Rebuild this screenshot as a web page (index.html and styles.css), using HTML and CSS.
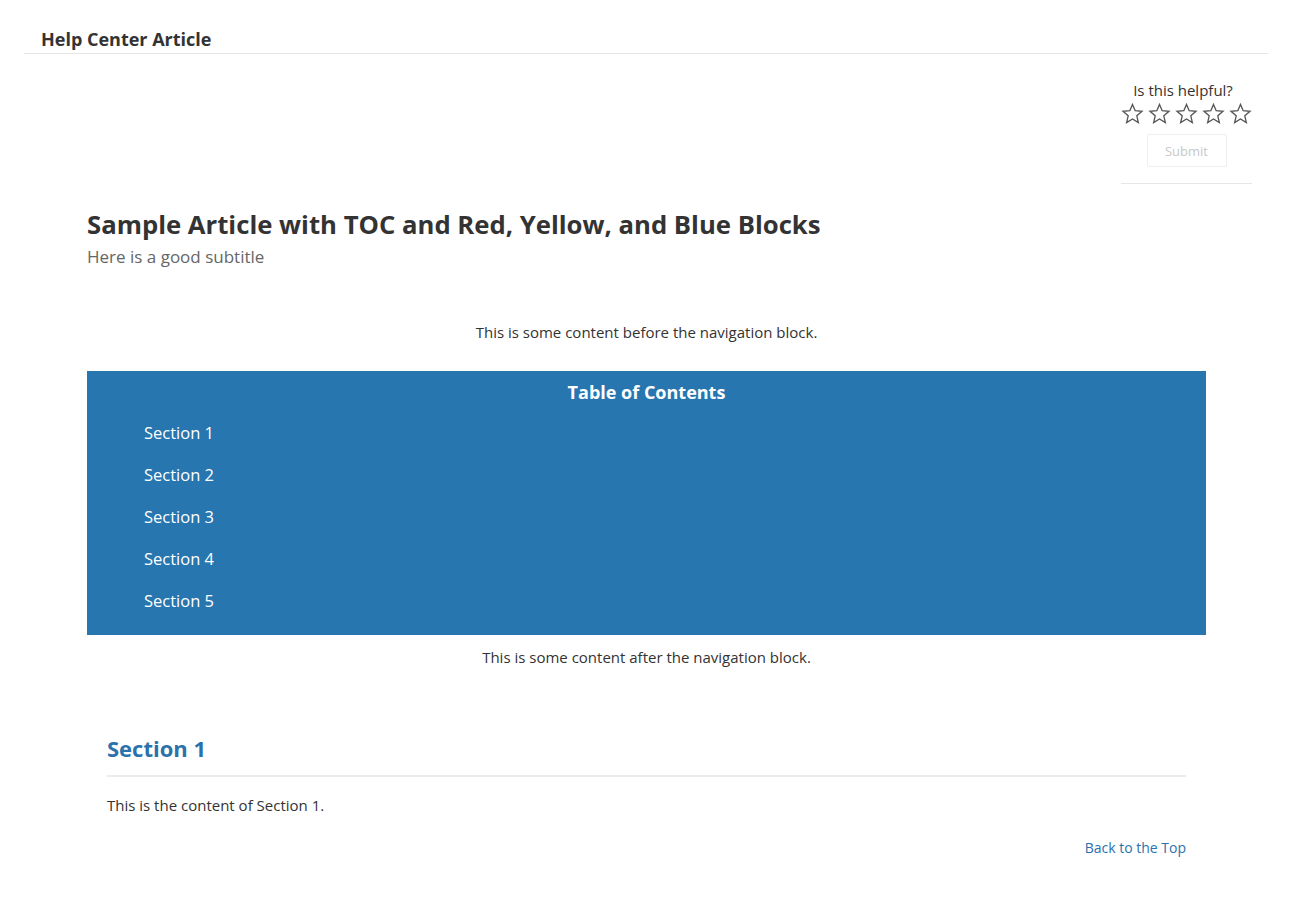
FILE: index.html
```html
<!DOCTYPE html>
<html>
<head>
<meta charset="utf-8">
<link rel="stylesheet" href="styles.css">
</head>
<body>
<header class="topbar"><span class="brand">Help Center Article</span></header>
<div class="page">
  <aside class="feedback">
    <div class="fb-q">Is this helpful?</div>
    <div class="stars">
      <svg viewBox="0 0 24 24" class="star"><path d="M12 2.5l2.8 6.6 7.1.6-5.4 4.7 1.6 7-6.1-3.7-6.1 3.7 1.6-7L2.1 9.7l7.1-.6z"/></svg>
      <svg viewBox="0 0 24 24" class="star"><path d="M12 2.5l2.8 6.6 7.1.6-5.4 4.7 1.6 7-6.1-3.7-6.1 3.7 1.6-7L2.1 9.7l7.1-.6z"/></svg>
      <svg viewBox="0 0 24 24" class="star"><path d="M12 2.5l2.8 6.6 7.1.6-5.4 4.7 1.6 7-6.1-3.7-6.1 3.7 1.6-7L2.1 9.7l7.1-.6z"/></svg>
      <svg viewBox="0 0 24 24" class="star"><path d="M12 2.5l2.8 6.6 7.1.6-5.4 4.7 1.6 7-6.1-3.7-6.1 3.7 1.6-7L2.1 9.7l7.1-.6z"/></svg>
      <svg viewBox="0 0 24 24" class="star"><path d="M12 2.5l2.8 6.6 7.1.6-5.4 4.7 1.6 7-6.1-3.7-6.1 3.7 1.6-7L2.1 9.7l7.1-.6z"/></svg>
    </div>
    <button class="submit">Submit</button>
  </aside>
  <main class="article">
    <h1 class="title">Sample Article with TOC and Red, Yellow, and Blue Blocks</h1>
    <p class="subtitle">Here is a good subtitle</p>
    <p class="center before">This is some content before the navigation block.</p>
    <nav class="toc">
      <div class="toc-title">Table of Contents</div>
      <ul class="toc-list">
        <li>Section 1</li>
        <li>Section 2</li>
        <li>Section 3</li>
        <li>Section 4</li>
        <li>Section 5</li>
      </ul>
    </nav>
    <p class="center after">This is some content after the navigation block.</p>
    <section class="sec">
      <h2 class="sec-title">Section 1</h2>
      <p class="sec-body">This is the content of Section 1.</p>
      <div class="back"><a href="#">Back to the Top</a></div>
    </section>
  </main>
</div>
</body>
</html>
```
FILE: styles.css
```css
* { box-sizing: border-box; }
body {
  margin: 0;
  font-family: "Open Sans", "Liberation Sans", sans-serif;
  color: #333;
  background: #fff;
}
.topbar {
  margin: 0 33px 0 24px;
  height: 54px;
  border-bottom: 1px solid #e6e6e6;
  padding: 28px 0 0 17px;
}
.brand {
  font-size: 18px;
  font-weight: 700;
  color: #333;
  line-height: 22px;
  display: block;
}
.page {
  display: flex;
  flex-direction: column;
}
.feedback {
  align-self: flex-end;
  width: 131px;
  margin: 26px 49px 0 0;
  border-bottom: 1px solid #e6e6e6;
  padding-bottom: 16px;
  display: flex;
  flex-direction: column;
  align-items: center;
}
.fb-q {
  font-size: 15px;
  line-height: 20px;
  color: #333;
  margin-right: 7px;
}
.stars {
  display: flex;
  gap: 4px;
  margin-top: 2px;
}
.star {
  width: 23px;
  height: 23px;
  fill: none;
  stroke: #555;
  stroke-width: 1.4;
  stroke-linejoin: miter;
}
.submit {
  margin-top: 9px;
  width: 80px;
  height: 33px;
  border: 1px solid #eee;
  background: #fff;
  color: #c8c8c8;
  font-family: inherit;
  font-size: 13px;
  border-radius: 2px;
}
.article {
  margin: 0 95px 0 87px;
}
.title {
  margin: 24px 0 0;
  font-size: 25.7px;
  line-height: 34px;
  font-weight: 700;
  color: #333;
}
.subtitle {
  margin: 3px 0 0;
  font-size: 17px;
  line-height: 24px;
  color: #666;
}
.center {
  text-align: center;
  font-size: 15px;
  line-height: 20px;
  margin: 0;
}
.before { margin-top: 53px; }
.toc {
  margin-top: 29px;
  background: #2776b0;
  color: #fff;
  padding: 9px 0 23px;
}
.toc-title {
  text-align: center;
  font-weight: 700;
  font-size: 18px;
  line-height: 24px;
}
.toc-list {
  list-style: none;
  margin: 18px 0 0;
  padding: 0 0 0 57px;
  display: flex;
  flex-direction: column;
  gap: 20px;
}
.toc-list li {
  font-size: 16.5px;
  line-height: 22px;
}
.after { margin-top: 12px; }
.sec {
  margin: 66px 20px 0;
}
.sec-title {
  margin: 0;
  font-size: 22px;
  line-height: 30px;
  font-weight: 700;
  color: #2b72ab;
  padding-bottom: 12px;
  border-bottom: 2px solid #ebebeb;
}
.sec-body {
  margin: 18px 0 0;
  font-size: 15px;
  line-height: 20px;
}
.back {
  text-align: right;
  margin-top: 23px;
  font-size: 14px;
  line-height: 20px;
}
.back a {
  color: #2b72ab;
  text-decoration: none;
}
```
